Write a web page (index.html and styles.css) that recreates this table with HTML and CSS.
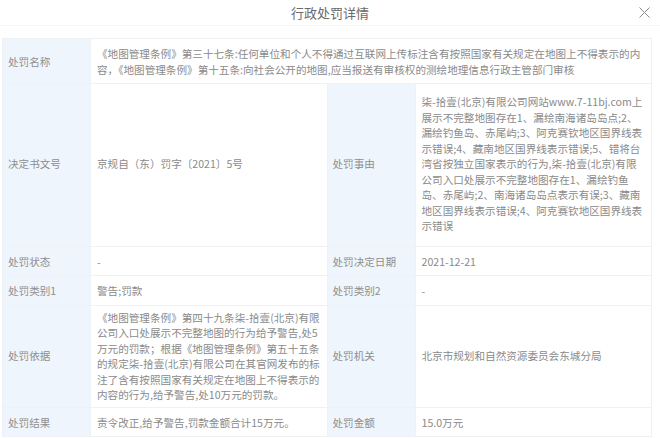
FILE: index.html
```html
<!DOCTYPE html>
<html lang="zh-CN">
<head>
    <meta charset="UTF-8">
    <meta name="viewport" content="width=device-width, initial-scale=1.0">
    <title>行政处罚详情</title>
    <link rel="stylesheet" href="styles.css">
</head>
<body>
    <div class="dialog">
        <!-- 标题栏 -->
        <div class="dialog-header">
            <span class="dialog-title">行政处罚详情</span>
            <span class="dialog-close">
                <svg width="11" height="11" viewBox="0 0 11 11"><path d="M0.5 0.5 L10.5 10.5 M10.5 0.5 L0.5 10.5" stroke="#8a8a8a" stroke-width="1" fill="none"/></svg>
            </span>
        </div>

        <!-- 详情表格 -->
        <table class="detail-table">
            <colgroup>
                <col class="col-label">
                <col class="col-value">
                <col class="col-label">
                <col class="col-value">
            </colgroup>
            <tr>
                <td class="label">处罚名称</td>
                <td class="value" colspan="3">《地图管理条例》第三十七条:任何单位和个人不得通过互联网上传标注含有按照国家有关规定在地图上不得表示的内容，《地图管理条例》第十五条:向社会公开的地图,应当报送有审核权的测绘地理信息行政主管部门审核</td>
            </tr>
            <tr class="row-tall">
                <td class="label">决定书文号</td>
                <td class="value">京规自（东）罚字〔2021〕5号</td>
                <td class="label">处罚事由</td>
                <td class="value value-right">柒-拾壹(北京)有限公司网站www.7-11bj.com上展示不完整地图存在1、漏绘南海诸岛岛点;2、漏绘钓鱼岛、赤尾屿;3、阿克赛钦地区国界线表示错误;4、藏南地区国界线表示错误;5、错将台湾省按独立国家表示的行为,柒-拾壹(北京)有限公司入口处展示不完整地图存在1、漏绘钓鱼岛、赤尾屿;2、南海诸岛岛点表示有误;3、藏南地区国界线表示错误;4、阿克赛钦地区国界线表示错误</td>
            </tr>
            <tr>
                <td class="label">处罚状态</td>
                <td class="value">-</td>
                <td class="label">处罚决定日期</td>
                <td class="value value-right">2021-12-21</td>
            </tr>
            <tr>
                <td class="label">处罚类别1</td>
                <td class="value">警告;罚款</td>
                <td class="label">处罚类别2</td>
                <td class="value value-right">-</td>
            </tr>
            <tr class="row-mid">
                <td class="label">处罚依据</td>
                <td class="value">《地图管理条例》第四十九条柒-拾壹(北京)有限公司入口处展示不完整地图的行为给予警告,处5万元的罚款；根据《地图管理条例》第五十五条的规定柒-拾壹(北京)有限公司在其官网发布的标注了含有按照国家有关规定在地图上不得表示的内容的行为,给予警告,处10万元的罚款。</td>
                <td class="label">处罚机关</td>
                <td class="value value-right">北京市规划和自然资源委员会东城分局</td>
            </tr>
            <tr>
                <td class="label">处罚结果</td>
                <td class="value">责令改正,给予警告,罚款金额合计15万元。</td>
                <td class="label">处罚金额</td>
                <td class="value value-right">15.0万元</td>
            </tr>
        </table>
    </div>
</body>
</html>
```

FILE: styles.css
```css
/* 页面基础 */
body {
    margin: 0;
    background-color: #fff;
    font-family: "Noto Sans CJK SC", "Noto Sans", sans-serif;
    color: #8a8a8a;
}

.dialog {
    width: 660px;
}

/* 标题栏 */
.dialog-header {
    display: flex;
    justify-content: center;
    align-items: center;
    height: 25px;
    border-bottom: 1px solid #f5f5f5;
    position: relative;
}

.dialog-title {
    font-size: 13px;
    color: #6a6a6a;
}

.dialog-close {
    position: absolute;
    right: 10px;
    top: 7px;
    line-height: 0;
}

/* 详情表格 */
.detail-table {
    margin: 12px 0 0 2px;
    width: 650px;
    border-collapse: collapse;
    table-layout: fixed;
    font-size: 10.6px;
    line-height: 15.5px;
}

.col-label {
    width: 88px;
}

.detail-table td {
    border: 1px solid #eef2f6;
    padding: 7px 3px 6px 6px;
    vertical-align: middle;
    word-break: break-all;
}

.detail-table .row-tall td {
    padding-top: 10px;
    padding-bottom: 12px;
}

.detail-table .row-mid td {
    padding-top: 4px;
    padding-bottom: 4px;
}

.detail-table td.label {
    background-color: #eef5fc;
    color: #8e8e8e;
    padding-left: 5px;
}

.detail-table td.value {
    color: #8a8a8a;
}

.detail-table td.value-right {
    padding-right: 7px;
}
```
